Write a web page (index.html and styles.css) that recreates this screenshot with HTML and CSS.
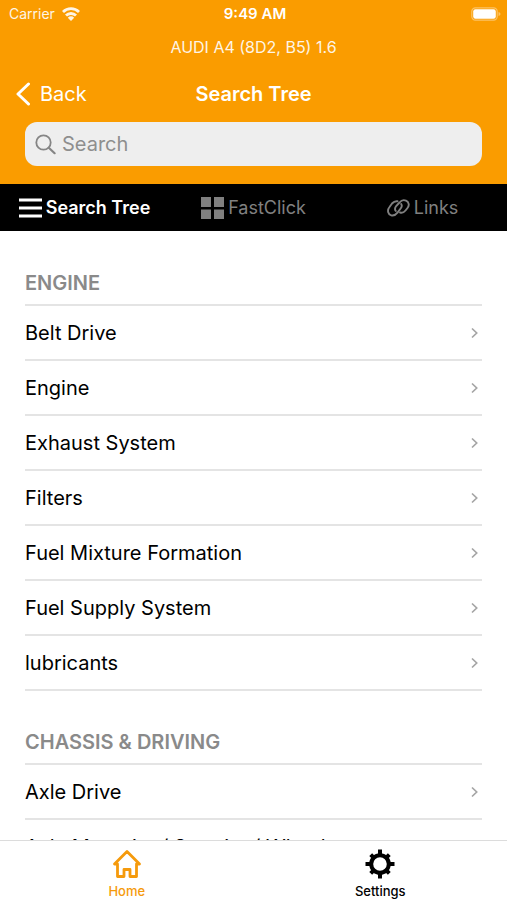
FILE: index.html
```html
<!DOCTYPE html>
<html lang="en">
<head>
<meta charset="utf-8">
<meta name="viewport" content="width=device-width, initial-scale=1">
<title>Search Tree</title>
<link rel="stylesheet" href="styles.css">
</head>
<body>
<header class="header">
  <div class="status">
    <span class="carrier">Carrier
      <svg width="18" height="14" viewBox="0 0 18 14" fill="none" stroke="currentColor" stroke-width="2.8"><path d="M1 5a11.4 11.4 0 0 1 16 0M4 8.600a7 7 0 0 1 10 0"/><path d="M9 14l-3.200-3.300a4.500 4.500 0 0 1 6.400 0z" fill="currentColor" stroke="none"/></svg>
    </span>
    <span class="time">9:49 AM</span>
    <svg class="battery" width="30" height="14" viewBox="0 0 30 14"><rect x=".8" y=".8" width="25.4" height="12.4" rx="3.6" fill="none" stroke="#fff" stroke-opacity=".4" stroke-width="1.2"/><rect x="2.2" y="2.2" width="22.6" height="9.6" rx="2.2" fill="#fff"/><path d="M27.5 5v4q2-.6 2-2t-2-2z" fill="#fff" fill-opacity=".4"/></svg>
  </div>
  <p class="vehicle">AUDI A4 (8D2, B5) 1.6</p>
  <nav class="navbar">
    <a class="back" href="#">
      <svg width="15" height="24" viewBox="0 0 15 24" fill="none" stroke="currentColor" stroke-width="3" stroke-linecap="round" stroke-linejoin="round"><path d="M12.5 2L2 12l10.500 10"/></svg>
      Back
    </a>
    <h1 class="title">Search Tree</h1>
  </nav>
  <label class="search">
    <svg width="21" height="21" viewBox="0 0 21 21" fill="none" stroke="currentColor" stroke-width="1.8" stroke-linecap="round"><circle cx="8.500" cy="8.500" r="7.2"/><path d="M13.800 13.800l5.800 5.400" stroke-width="2.200"/></svg>
    <input type="search" placeholder="Search" aria-label="Search">
  </label>
</header>
<nav class="tabs">
  <a class="tab active" href="#">
    <svg width="23" height="22" viewBox="0 0 23 22" fill="currentColor"><path d="M0 1.500h23v3H0zM0 9.500h23v3H0zM0 17.500h23v3H0z"/></svg>
    Search Tree
  </a>
  <a class="tab" href="#">
    <svg width="23" height="22" viewBox="0 0 23 22" fill="currentColor"><path d="M0 0h10v10H0zM13 0h10v10H13zM0 12.500h10v9.500H0zM13 12.500h10v9.500H13z"/></svg>
    FastClick
  </a>
  <a class="tab" href="#">
    <svg width="23" height="18" viewBox="0 0 23 18" fill="none" stroke="currentColor" stroke-width="1.900" stroke-linecap="round"><path d="M10.500 2.300C8.500 1.900 6.500 2.800 5 4.500L2.500 8C-.3 11.500 1.300 15.600 4.200 16.300c2.600.6 4.700-.5 6.300-2.600L13.800 9.300c1-1.300 1.300-2.900.4-4.300"/><path d="M8.800 12C7.600 10.500 7.900 8.700 9.200 7L12.500 3.500C14.200 1.400 16.600.6 19 1.600c3 1.200 3.600 4.900 1.500 7.400L18.500 11.500c-1.500 1.800-3.400 2.600-5.500 2"/></svg>
    Links
  </a>
</nav>
<svg class="symbols" aria-hidden="true"><symbol id="chevron" viewBox="0 0 7 12"><path d="M1 1.500l4.700 4.500L1 10.500" fill="none" stroke="#a5a5a5" stroke-width="1.700"/></symbol></svg>
<main class="content">
  <section class="group">
    <h2 class="heading">ENGINE</h2>
    <ul class="list">
      <li><a class="row" href="#">Belt Drive<svg class="chevron"><use href="#chevron"/></svg></a></li>
      <li><a class="row" href="#">Engine<svg class="chevron"><use href="#chevron"/></svg></a></li>
      <li><a class="row" href="#">Exhaust System<svg class="chevron"><use href="#chevron"/></svg></a></li>
      <li><a class="row" href="#">Filters<svg class="chevron"><use href="#chevron"/></svg></a></li>
      <li><a class="row" href="#">Fuel Mixture Formation<svg class="chevron"><use href="#chevron"/></svg></a></li>
      <li><a class="row" href="#">Fuel Supply System<svg class="chevron"><use href="#chevron"/></svg></a></li>
      <li><a class="row" href="#">lubricants<svg class="chevron"><use href="#chevron"/></svg></a></li>
    </ul>
  </section>
  <section class="group">
    <h2 class="heading">CHASSIS &amp; DRIVING</h2>
    <ul class="list">
      <li><a class="row" href="#">Axle Drive<svg class="chevron"><use href="#chevron"/></svg></a></li>
      <li><a class="row" href="#">Axle Mounting/ Steering/ Wheels<svg class="chevron"><use href="#chevron"/></svg></a></li>
    </ul>
  </section>
</main>
<nav class="bottom">
  <a class="item current" href="#">
    <svg width="30" height="30" viewBox="0 0 30 30" fill="none" stroke="currentColor" stroke-width="2.800" stroke-linejoin="round"><path d="M2.500 15L15 2.500 27.500 15H24.500v12.500h-6.500v-7h-6v7H5.500V15z"/></svg>
    Home
  </a>
  <a class="item" href="#">
    <svg width="30" height="30" viewBox="0 0 30 30" fill="none" stroke="currentColor"><circle cx="15" cy="15" r="8.800" stroke-width="4"/><path d="M15 .5V6M15 24v5.500M.5 15H6M24 15h5.500M5.700 5.700l3.300 3.300M21 21l3.300 3.300M24.300 5.700l-3.300 3.300M9 21l-3.300 3.300" stroke-width="4"/></svg>
    Settings
  </a>
</nav>
</body>
</html>
```
FILE: styles.css
```css
* { box-sizing: border-box; }

body {
  margin: 0;
  height: 100vh;
  display: flex;
  flex-direction: column;
  overflow: hidden;
  background: #fff;
  color: #000;
  font-family: Inter, "Liberation Sans", sans-serif;
  font-size: 20px;
  line-height: 28px;
}

a { color: inherit; text-decoration: none; }
svg { flex: none; }
h1, h2, p, ul { margin: 0; padding: 0; }

.header {
  padding-bottom: 18px;
  background: #fa9c00;
  color: #fff;
}

.status {
  display: grid;
  grid-template-columns: 1fr auto 1fr;
  align-items: center;
  height: 28px;
  padding: 0 6px 0 9px;
  font-size: 14px;
}

.carrier { display: flex; align-items: center; gap: 7px; opacity: .9; }
.time { font-size: 15px; font-weight: 600; }
.battery { justify-self: end; }

.vehicle {
  height: 38px;
  line-height: 38px;
  text-align: center;
  font-size: 16px;
  opacity: .9;
}

.navbar {
  display: grid;
  grid-template-columns: 1fr auto 1fr;
  align-items: center;
  height: 56px;
  padding: 0 16px;
}

.back { display: flex; align-items: center; gap: 9px; }
.title { font-size: 20px; font-weight: 600; }

.search {
  display: flex;
  align-items: center;
  gap: 6px;
  height: 44px;
  margin: 0 25px;
  padding: 0 10px;
  border-radius: 12px;
  background: #eee;
  color: #858585;
}

.search input {
  flex: 1;
  min-width: 0;
  padding: 0;
  border: 0;
  outline: 0;
  background: none;
  color: inherit;
  font: inherit;
}

.search input::placeholder { color: #8e8e8e; opacity: 1; }

.tabs {
  display: grid;
  grid-template-columns: repeat(3, 1fr);
  height: 47px;
  background: #000;
  color: #808080;
  font-size: 18px;
}

.tab {
  display: flex;
  align-items: center;
  justify-content: center;
  gap: 4px;
}

.tab.active { color: #fff; font-weight: 600; }

.symbols { position: absolute; width: 0; height: 0; }

.content {
  flex: 1;
  min-height: 0;
  overflow: hidden;
  padding: 0 25px;
}

.group { padding-top: 38px; }
.group + .group { padding-top: 37px; }

.heading {
  height: 35px;
  color: #8a8a8a;
  font-size: 20px;
  font-weight: 600;
}

.list { list-style: none; border-top: 2px solid #e4e4e4; }

.row {
  display: flex;
  align-items: center;
  justify-content: space-between;
  height: 55px;
  border-bottom: 2px solid #e4e4e4;
}

.chevron { width: 7px; height: 12px; margin-right: 4px; }

.bottom {
  display: grid;
  grid-template-columns: 1fr 1fr;
  height: 60px;
  border-top: 1px solid #dcdcdc;
  background: #fff;
  font-size: 13px;
  font-weight: 500;
  line-height: 16px;
}

.item {
  display: flex;
  flex-direction: column;
  align-items: center;
  gap: 4px;
  padding-top: 8px;
}

.item.current { color: #f59a0c; }
```
